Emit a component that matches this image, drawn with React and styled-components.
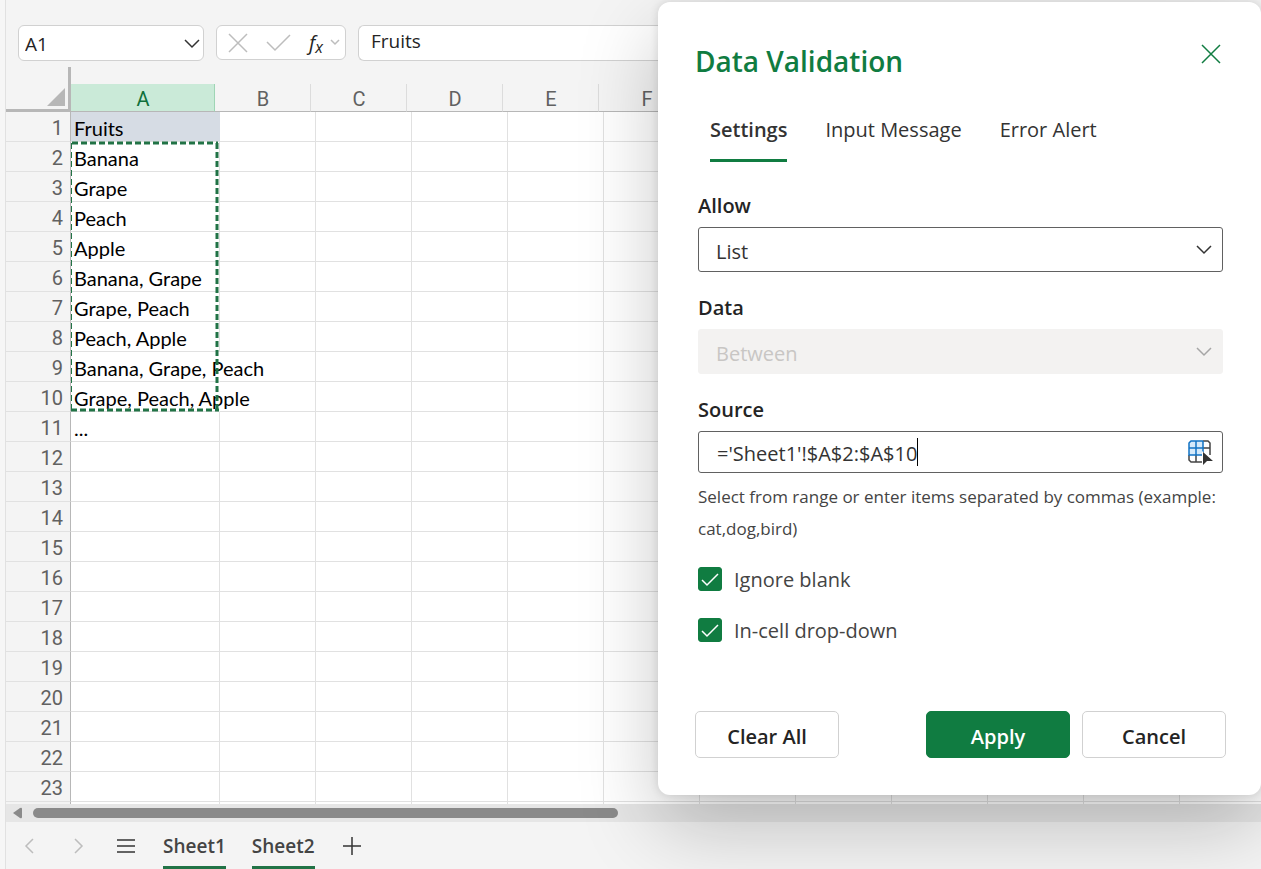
import { useState } from "react";
import styled, { createGlobalStyle } from "styled-components";

const COLUMNS = ["A", "B", "C", "D", "E", "F", "G", "H", "I", "J", "K", "L"];
const ROW_COUNT = 24;
const VALUES = [
  "Fruits",
  "Banana",
  "Grape",
  "Peach",
  "Apple",
  "Banana, Grape",
  "Grape, Peach",
  "Peach, Apple",
  "Banana, Grape, Peach",
  "Grape, Peach, Apple",
  "...",
];
const SPILL_ROWS = [8, 9];
const TABS = ["Settings", "Input Message", "Error Alert"];
const SHEETS = ["Sheet1", "Sheet2"];

const Icon = ({ w, h, d, color = "#333", stroke = 1.5 }) => (
  <svg width={w} height={h} viewBox={`0 0 ${w} ${h}`} fill="none" aria-hidden="true">
    <path d={d} stroke={color} strokeWidth={stroke} />
  </svg>
);

const RangeIcon = () => (
  <svg width="26" height="26" viewBox="0 0 26 26" fill="none" aria-hidden="true">
    <path d="M3 2h13v14H2V3z" fill="#d6eafa" />
    <path d="M16 2h5l2 2v12M2 16v5l2 2h12M9 16v7M16 9h7" stroke="#444" strokeWidth="1.5" />
    <path d="M16 2H4L2 4v12h14M9 2v14M2 9h14M16 2v14" stroke="#1273c4" strokeWidth="1.5" />
    <path d="M15 12l11 10h-6l-5 5z" fill="#fff" />
    <path d="M16 13l10 9h-6l-4 4z" fill="#333" />
  </svg>
);

const Sheet = () => (
  <GridArea>
    <Table>
      <thead>
        <HeaderRow>
          <Corner aria-label="Select all">
            <svg width="18" height="18" aria-hidden="true">
              <path d="M18 0v18H0z" fill="#b7b7b7" />
            </svg>
          </Corner>
          {COLUMNS.map((name) => (
            <ColumnHead key={name} $active={name === "A"}>
              {name}
            </ColumnHead>
          ))}
        </HeaderRow>
      </thead>
      <Body>
        {Array.from({ length: ROW_COUNT }, (_, row) => (
          <Row key={row}>
            <RowHead>{row + 1}</RowHead>
            {COLUMNS.map((name, col) => (
              <Cell
                key={name}
                $filled={row === 0 && col === 0}
                $spill={col === 0 && SPILL_ROWS.includes(row)}
              >
                {col === 0 ? VALUES[row] : null}
              </Cell>
            ))}
          </Row>
        ))}
      </Body>
    </Table>
    <Marquee width="149" height="271" aria-hidden="true">
      <path d="M1 2H147" stroke="#217346" strokeWidth="3" strokeDasharray="6 3" />
      <path d="M0 269H148" stroke="#217346" strokeWidth="3" strokeDasharray="6 3" />
      <path d="M146 2V270" stroke="#217346" strokeWidth="3" strokeDasharray="6 3" />
      <path d="M.5 2V270" stroke="#217346" strokeWidth="1" strokeDasharray="6 3" />
    </Marquee>
  </GridArea>
);

const DataValidation = () => {
  const [tab, setTab] = useState("Settings");
  const [source, setSource] = useState("='Sheet1'!$A$2:$A$10");

  return (
    <Panel role="dialog" aria-labelledby="dv-title">
      <PanelTop>
        <PanelTitle id="dv-title">Data Validation</PanelTitle>
        <CloseButton aria-label="Close">
          <Icon w={20} h={20} d="M1 1l18 18M19 1L1 19" color="#107c41" />
        </CloseButton>
      </PanelTop>
      <Tabs role="tablist">
        {TABS.map((name) => (
          <Tab
            key={name}
            role="tab"
            aria-selected={tab === name}
            $active={tab === name}
            onClick={() => setTab(name)}
          >
            {name}
          </Tab>
        ))}
      </Tabs>
      <Fields>
        <Field>
          <Label htmlFor="allow">Allow</Label>
          <SelectBox>
            <Select id="allow" defaultValue="List">
              <option>List</option>
            </Select>
            <Icon w={16} h={10} d="M1 1l7 7 7-7" />
          </SelectBox>
        </Field>
        <Field>
          <Label htmlFor="data">Data</Label>
          <SelectBox>
            <Select id="data" defaultValue="Between" disabled>
              <option>Between</option>
            </Select>
            <Icon w={16} h={10} d="M1 1l7 7 7-7" color="#a6a6a6" />
          </SelectBox>
        </Field>
        <Field>
          <Label htmlFor="source">Source</Label>
          <SourceBox>
            <SourceInput
              id="source"
              value={source}
              onChange={(e) => setSource(e.target.value)}
            />
            <Caret />
            <RangeButton aria-label="Select range">
              <RangeIcon />
            </RangeButton>
          </SourceBox>
        </Field>
        <Hint>
          Select from range or enter items separated by commas (example: cat,dog,bird)
        </Hint>
        <Checks>
          <CheckLabel>
            <Checkbox type="checkbox" defaultChecked />
            <Icon w={24} h={24} d="M4 13l5 5L20 7" color="#fff" />
            Ignore blank
          </CheckLabel>
          <CheckLabel>
            <Checkbox type="checkbox" defaultChecked />
            <Icon w={24} h={24} d="M4 13l5 5L20 7" color="#fff" />
            In-cell drop-down
          </CheckLabel>
        </Checks>
      </Fields>
      <Actions>
        <Button>Clear All</Button>
        <ActionsRight>
          <Button $primary>Apply</Button>
          <Button>Cancel</Button>
        </ActionsRight>
      </Actions>
    </Panel>
  );
};

const App = () => (
  <Page>
    <GlobalStyle />
    <Workbook>
      <FormulaBar>
        <NameBox>
          <NameInput aria-label="Name box" defaultValue="A1" />
          <Icon w={16} h={10} d="M1 1l7 7 7-7" />
        </NameBox>
        <FormulaTools>
          <ToolButton aria-label="Cancel entry">
            <Icon w={20} h={20} d="M1 1l18 18M19 1L1 19" color="#bdbdbd" />
          </ToolButton>
          <ToolButton aria-label="Confirm entry">
            <Icon w={25} h={20} d="M1 9l8 8L24 2" color="#bdbdbd" />
          </ToolButton>
          <ToolButton aria-label="Insert function">
            <Fx>
              f<sub>x</sub>
            </Fx>
            <Icon w={10} h={7} d="M1 1l4 4 4-4" color="#bdbdbd" />
          </ToolButton>
        </FormulaTools>
        <FormulaInput aria-label="Formula" defaultValue="Fruits" />
      </FormulaBar>
      <Sheet />
      <ScrollTrack>
        <svg width="10" height="12" aria-hidden="true">
          <path d="M0 6L7 1q2-1 2 1v8q0 2-2 1z" fill="#8a8a8a" />
        </svg>
        <ScrollThumb />
      </ScrollTrack>
      <SheetBar>
        <SheetNav>
          <BarButton aria-label="Previous sheet">
            <Icon w={10} h={16} d="M9 1L2 8l7 7" color="#bdbdbd" />
          </BarButton>
          <BarButton aria-label="Next sheet">
            <Icon w={10} h={16} d="M1 1l7 7-7 7" color="#bdbdbd" />
          </BarButton>
        </SheetNav>
        <BarButton aria-label="All sheets">
          <Icon w={18} h={16} d="M0 2h18M0 8h18M0 14h18" />
        </BarButton>
        <SheetTabs>
          {SHEETS.map((name) => (
            <SheetTab key={name}>{name}</SheetTab>
          ))}
        </SheetTabs>
        <BarButton aria-label="New sheet">
          <Icon w={18} h={18} d="M9 0v18M0 9h18" />
        </BarButton>
      </SheetBar>
    </Workbook>
    <DataValidation />
  </Page>
);

export default App;

const GlobalStyle = createGlobalStyle`
  * {
    box-sizing: border-box;
  }
  body {
    margin: 0;
    font-family: "Open Sans", "Noto Sans", sans-serif;
    color: #333;
  }
  button,
  input,
  select {
    font: inherit;
    color: inherit;
    outline: none;
  }
  button {
    padding: 0;
    border: none;
    background: none;
    cursor: pointer;
  }
`;
const Page = styled.div`
  position: relative;
  height: 100vh;
  padding-left: 5px;
  overflow: hidden;
  background: #f6f6f6;
`;
const Workbook = styled.main`
  height: 100%;
  padding-top: 25px;
  display: flex;
  flex-direction: column;
  border-left: 1px solid #e1e1e1;
  background: #f4f4f4;
`;
const FormulaBar = styled.div`
  display: flex;
  gap: 12px;
  padding-left: 12px;
  font-size: 19px;
  color: #242424;
`;
const NameBox = styled.div`
  width: 186px;
  height: 36px;
  padding: 2px 3px 0 6px;
  display: flex;
  align-items: center;
  justify-content: space-between;
  border: 1px solid #d1d1d1;
  border-radius: 6px;
  background: #fff;
`;
const NameInput = styled.input`
  width: 120px;
  padding: 0;
  border: none;
  background: none;
`;
const FormulaTools = styled.div`
  width: 130px;
  height: 35px;
  padding: 0 5px 0 11px;
  display: flex;
  align-items: center;
  justify-content: space-between;
  border: 1px solid #d1d1d1;
  border-radius: 6px;
  background: #fff;
`;
const ToolButton = styled.button`
  display: flex;
  align-items: center;
  gap: 7px;
`;
const Fx = styled.span`
  font-style: italic;
  font-size: 20px;
  line-height: 24px;
  sub {
    font-size: 16px;
    line-height: 0;
    vertical-align: -3px;
  }
`;
const FormulaInput = styled.input`
  flex: 1;
  height: 36px;
  padding: 0 12px 4px;
  border: 1px solid #d1d1d1;
  border-right: none;
  border-radius: 6px 0 0 6px;
  background: #fff;
`;
const GridArea = styled.div`
  position: relative;
  flex: 1;
  min-height: 0;
  margin-top: 6px;
  overflow: hidden;
`;
const Table = styled.table`
  display: block;
  border-spacing: 0;
  thead,
  tbody {
    display: block;
  }
`;
const HeaderRow = styled.tr`
  display: grid;
  grid-template-columns: 65px 144px repeat(11, 96px);
  align-items: end;
`;
const Corner = styled.th`
  height: 45px;
  padding: 0 3px 3px 0;
  display: flex;
  align-items: flex-end;
  justify-content: flex-end;
  border-right: 3px solid #b7b7b7;
  border-bottom: 3px solid #b7b7b7;
`;
const ColumnHead = styled.th`
  height: 28px;
  padding: 0 0 0 1px;
  font-family: Roboto, sans-serif;
  font-weight: 400;
  font-size: 20px;
  line-height: 30px;
  border-right: 1px solid ${(props) => (props.$active ? "#9fd5b5" : "#dcdcdc")};
  border-bottom: 1px solid #b7b7b7;
  color: ${(props) => (props.$active ? "#0f703b" : "#616161")};
  background: ${(props) => (props.$active ? "#caead8" : "#f4f4f4")};
`;
const Body = styled.tbody`
  background: #fff;
`;
const Row = styled.tr`
  display: grid;
  grid-template-columns: 65px 149px repeat(11, 96px);
  grid-template-rows: 30px;
`;
const RowHead = styled.th`
  padding: 0 7px 0 0;
  font-family: Roboto, sans-serif;
  font-weight: 400;
  font-size: 20px;
  line-height: 32px;
  text-align: right;
  color: #616161;
  border-right: 1px solid #b7b7b7;
  border-bottom: 1px solid #e1e1e1;
  background: #f4f4f4;
`;
const Cell = styled.td`
  min-width: 0;
  padding: 0 3px;
  font-family: Lato, sans-serif;
  font-size: 20px;
  line-height: 32px;
  white-space: nowrap;
  color: #000;
  border-right: 1px solid;
  border-bottom: 1px solid #e1e1e1;
  border-right-color: ${(props) =>
    props.$filled ? "#d6dce4" : props.$spill ? "transparent" : "#e1e1e1"};
  background: ${(props) => (props.$filled ? "#d6dce4" : "none")};
`;
/* copied-range outline around A2:A10 */
const Marquee = styled.svg`
  position: absolute;
  left: 65px;
  top: 74px;
`;
const ScrollTrack = styled.div`
  height: 18px;
  padding-left: 7px;
  display: flex;
  align-items: center;
  gap: 10px;
  background: #e6e6e6;
`;
const ScrollThumb = styled.div`
  width: 585px;
  height: 10px;
  border-radius: 5px;
  background: #8a8a8a;
`;
const SheetBar = styled.div`
  height: 47px;
  padding-left: 18px;
  display: flex;
  align-items: stretch;
  gap: 28px;
  font-size: 19px;
`;
const SheetNav = styled.div`
  display: flex;
  gap: 40px;
  margin-right: 5px;
`;
const BarButton = styled.button`
  display: flex;
  align-items: center;
`;
const SheetTabs = styled.div`
  display: flex;
  gap: 26px;
`;
const SheetTab = styled.button`
  font-weight: 600;
  color: #444;
  border-top: 3px solid transparent;
  border-bottom: 3px solid #217346;
`;
const Panel = styled.section`
  position: absolute;
  top: 2px;
  right: 0;
  width: 603px;
  padding: 35px 35px 37px 37px;
  border-radius: 12px;
  background: #fff;
  box-shadow: 0 0 10px rgba(0, 0, 0, 0.12), 0 32px 80px rgba(0, 0, 0, 0.22);
`;
const PanelTop = styled.div`
  display: flex;
  align-items: flex-start;
  justify-content: space-between;
`;
const PanelTitle = styled.h1`
  margin: 0;
  font-size: 28px;
  font-weight: 600;
  line-height: 48px;
  color: #107c41;
`;
const CloseButton = styled.button`
  display: flex;
  padding: 7px 5px;
`;
const Tabs = styled.div`
  display: flex;
  gap: 38px;
  margin-top: 19px;
  padding-left: 15px;
`;
const Tab = styled.button`
  height: 58px;
  padding-bottom: 3px;
  font-size: 20px;
  line-height: 24px;
  font-weight: ${(props) => (props.$active ? 600 : 400)};
  border-bottom: 3px solid ${(props) => (props.$active ? "#107c41" : "transparent")};
`;
const Fields = styled.div`
  padding: 28px 3px 0;
`;
const Field = styled.div`
  margin-bottom: 19px;
`;
const Label = styled.label`
  display: block;
  margin-bottom: 5px;
  font-size: 20px;
  font-weight: 600;
  line-height: 32px;
  color: #242424;
`;
const SelectBox = styled.div`
  position: relative;
  margin-bottom: 20px;
  svg {
    position: absolute;
    right: 11px;
    top: 18px;
    pointer-events: none;
  }
`;
const Select = styled.select`
  display: block;
  width: 100%;
  height: 45px;
  padding: 3px 17px 0;
  appearance: none;
  font-size: 20px;
  border: 1px solid #616161;
  border-radius: 3px;
  background: #fff;
  &:disabled {
    opacity: 1;
    color: #c8c6c4;
    border-color: #f3f2f1;
    background: #f3f2f1;
  }
`;
const SourceBox = styled.div`
  height: 42px;
  padding: 0 9px 0 18px;
  display: flex;
  align-items: center;
  border: 1px solid #616161;
  border-radius: 3px;
`;
const SourceInput = styled.input`
  field-sizing: content;
  padding: 2px 0 0;
  border: none;
  font-size: 20px;
  background: none;
`;
const Caret = styled.span`
  width: 1px;
  height: 28px;
  background: #000;
`;
const RangeButton = styled.button`
  display: flex;
  margin-left: auto;
`;
const Hint = styled.p`
  margin: -11px -3px 0 0;
  font-size: 17px;
  line-height: 32px;
  color: #444;
`;
const Checks = styled.div`
  display: flex;
  flex-direction: column;
  gap: 19px;
  margin-top: 19px;
`;
const CheckLabel = styled.label`
  position: relative;
  display: flex;
  align-items: center;
  gap: 12px;
  font-size: 20px;
  line-height: 32px;
  color: #444;
  svg {
    position: absolute;
    left: 0;
    top: 3px;
    pointer-events: none;
  }
`;
const Checkbox = styled.input`
  appearance: none;
  width: 24px;
  height: 24px;
  margin: 0 0 2px;
  border: 1px solid #107c41;
  border-radius: 3px;
  &:checked {
    background: #107c41;
  }
`;
const Actions = styled.div`
  display: flex;
  justify-content: space-between;
  margin-top: 64px;
`;
const ActionsRight = styled.div`
  display: flex;
  gap: 12px;
`;
const Button = styled.button`
  width: 144px;
  height: 47px;
  padding-top: 3px;
  font-size: 20px;
  font-weight: 600;
  border-radius: 5px;
  border: 1px solid ${(props) => (props.$primary ? "#107c41" : "#d1d1d1")};
  color: ${(props) => (props.$primary ? "#fff" : "#242424")};
  background: ${(props) => (props.$primary ? "#107c41" : "#fff")};
`;
